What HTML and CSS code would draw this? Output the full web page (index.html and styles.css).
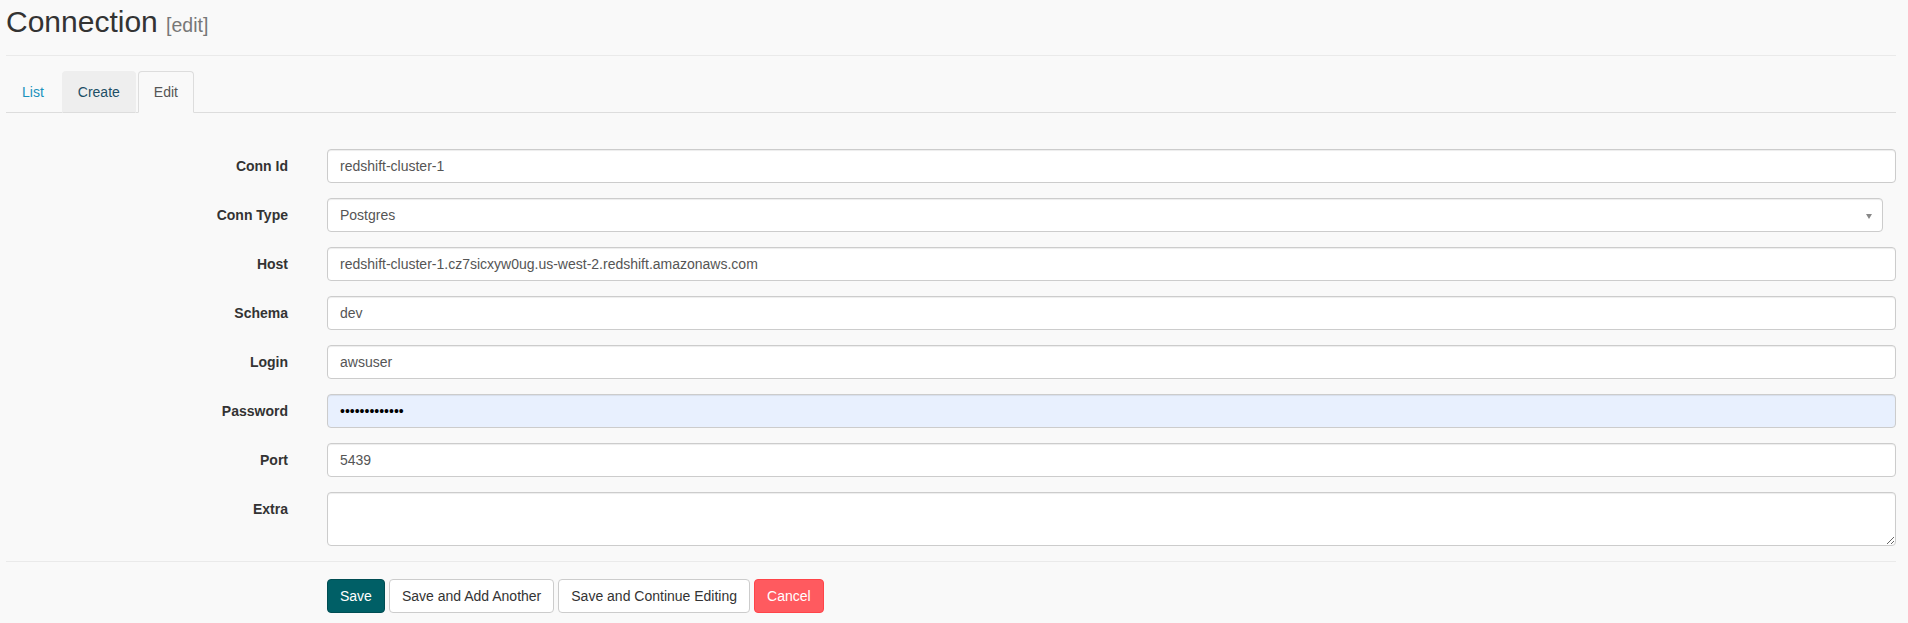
FILE: index.html
```html
<!DOCTYPE html>
<html>
<head>
<meta charset="utf-8">
<link rel="stylesheet" href="styles.css">
</head>
<body>
<div class="page">
  <h2 class="title">Connection <small>[edit]</small></h2>
  <hr class="rule rule-top">
  <ul class="tabs">
    <li><a class="tab tab-list" href="#">List</a></li>
    <li><a class="tab tab-create" href="#">Create</a></li>
    <li><a class="tab tab-active" href="#">Edit</a></li>
  </ul>
  <form class="form">
    <label class="lbl">Conn Id</label>
    <input class="ctl" type="text" value="redshift-cluster-1">
    <label class="lbl">Conn Type</label>
    <div class="ctl ctl-select"><span>Postgres</span><span class="arrow"></span></div>
    <label class="lbl">Host</label>
    <input class="ctl" type="text" value="redshift-cluster-1.cz7sicxyw0ug.us-west-2.redshift.amazonaws.com">
    <label class="lbl">Schema</label>
    <input class="ctl" type="text" value="dev">
    <label class="lbl">Login</label>
    <input class="ctl" type="text" value="awsuser">
    <label class="lbl">Password</label>
    <input class="ctl ctl-auto" type="password" value="xxxxxxxxxxxxx">
    <label class="lbl">Port</label>
    <input class="ctl" type="text" value="5439">
    <label class="lbl lbl-top">Extra</label>
    <textarea class="ctl ctl-area"></textarea>
  </form>
  <hr class="rule rule-bottom">
  <div class="actions">
    <button class="btn btn-primary" type="button">Save</button>
    <button class="btn" type="button">Save and Add Another</button>
    <button class="btn" type="button">Save and Continue Editing</button>
    <button class="btn btn-danger" type="button">Cancel</button>
  </div>
</div>
</body>
</html>
```
FILE: styles.css
```css
html, body {
  margin: 0;
  padding: 0;
  background: #f9f9f9;
}
body {
  font-family: "Liberation Sans", Arial, sans-serif;
  font-size: 14px;
  line-height: 20px;
  color: #333;
}
.page {
  padding: 0 12px 0 6px;
}
.title {
  margin: 5px 0 0;
  height: 33px;
  font-size: 30px;
  line-height: 33px;
  font-weight: 400;
  color: #333;
}
.title small {
  font-size: 65%;
  line-height: 1;
  color: #777;
  font-weight: 400;
}
.rule {
  border: 0;
  border-top: 1px solid #eaeaea;
  margin: 0;
  height: 0;
}
.rule-top {
  margin-top: 17px;
}
.tabs {
  list-style: none;
  margin: 15px 0 0;
  padding: 0;
  display: flex;
  border-bottom: 1px solid #ddd;
}
.tabs li {
  margin-bottom: -1px;
}
.tab {
  display: block;
  padding: 10px 15px;
  line-height: 20px;
  margin-right: 2px;
  border: 1px solid transparent;
  border-radius: 4px 4px 0 0;
  text-decoration: none;
}
.tab-list {
  color: #1a92bd;
}
.tab-create {
  color: #1d4f66;
  background: #eee;
  border-color: #eee #eee #ddd;
}
.tab-active {
  color: #555;
  background: #f9f9f9;
  border-color: #ddd #ddd transparent;
}
.form {
  display: grid;
  grid-template-columns: 282px 1fr;
  column-gap: 39px;
  row-gap: 15px;
  margin-top: 36px;
  align-items: center;
}
.lbl {
  text-align: right;
  font-weight: 700;
  color: #333;
}
.lbl-top {
  align-self: start;
  padding-top: 7px;
}
.ctl {
  box-sizing: border-box;
  height: 34px;
  width: 100%;
  margin: 0;
  padding: 6px 12px;
  font-family: "Liberation Sans", Arial, sans-serif;
  font-size: 14px;
  line-height: 20px;
  color: #555;
  background: #fff;
  border: 1px solid #ccc;
  border-radius: 4px;
  box-shadow: inset 0 1px 1px rgba(0,0,0,.075);
  outline: none;
}
.ctl-select {
  display: flex;
  align-items: center;
  justify-content: space-between;
  width: calc(100% - 13px);
  padding-right: 10px;
}
.arrow {
  width: 0;
  height: 0;
  border-left: 3.5px solid transparent;
  border-right: 3.5px solid transparent;
  border-top: 5px solid #888;
  margin-top: 2px;
}
.ctl-auto {
  background: #e8f0fe;
  color: #000;
}
.ctl-area {
  height: 54px;
  resize: vertical;
  display: block;
}
.rule-bottom {
  margin-top: 15px;
}
.actions {
  margin-top: 17px;
  padding-left: 321px;
  display: flex;
  gap: 4px;
}
.btn {
  box-sizing: border-box;
  height: 34px;
  padding: 6px 12px;
  font-family: "Liberation Sans", Arial, sans-serif;
  font-size: 14px;
  line-height: 20px;
  color: #333;
  background: #fff;
  border: 1px solid #ccc;
  border-radius: 4px;
  cursor: pointer;
}
.btn-primary {
  color: #fff;
  background: #005f66;
  border-color: #004d53;
}
.btn-danger {
  color: #fff;
  background: #ff5a5f;
  border-color: #ff4449;
}
```
